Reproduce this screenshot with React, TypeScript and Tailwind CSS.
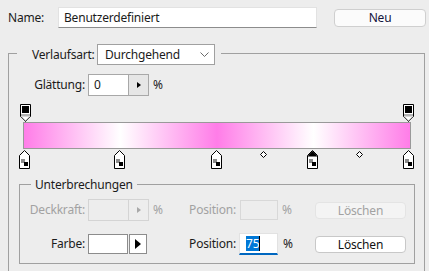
import React from 'react';

const TopStop: React.FC<{ left: string }> = ({ left }) => (
  <svg className={`absolute top-0 ${left}`} width="11" height="18" viewBox="0 0 11 18">
    <path d="M0.5 0.5 H10.5 V12.5 L5.5 17.5 L0.5 12.5 Z" fill="#ffffff" stroke="#000000" />
    <rect x="2" y="2" width="7" height="7" fill="#000000" />
    <rect x="1" y="10" width="9" height="2.5" fill="#b4b4b4" />
    <path d="M1.5 13 L5.5 17 L9.5 13" fill="none" stroke="#9a9a9a" />
  </svg>
);

const BottomStop: React.FC<{ left: string; active?: boolean }> = ({ left, active }) => (
  <svg className={`absolute top-0 ${left}`} width="11" height="19" viewBox="0 0 11 19">
    <path d="M5.5 0.5 L10.5 5.5 V18.5 H0.5 V5.5 Z" fill="#ffffff" stroke="#000000" />
    {active && <path d="M5.5 1 L10 5.5 V6.5 H1 V5.5 Z" fill="#000000" />}
    <rect x="2" y="8" width="7" height="9" fill="#ffffff" />
    <rect x="2" y="9" width="4" height="4" fill="#8c8c8c" />
    <rect x="5" y="12" width="4" height="4" fill="#000000" />
  </svg>
);

const Diamond: React.FC<{ left: string }> = ({ left }) => (
  <svg className={`absolute top-[1px] ${left}`} width="7" height="7" viewBox="0 0 7 7">
    <path d="M3.5 0.5 L6.5 3.5 L3.5 6.5 L0.5 3.5 Z" fill="#ffffff" stroke="#000000" />
  </svg>
);

const SpinField: React.FC<{ value?: string; disabled?: boolean }> = ({ value, disabled }) => (
  <div
    className={`flex h-[22px] w-[61px] border ${
      disabled ? 'border-[#d4d4d4] bg-[#ededed]' : 'border-[#a8a8a8] bg-white'
    }`}
  >
    <div className="flex-1 pl-[5px] leading-[20px]">{value}</div>
    <div
      className={`flex w-[20px] items-center justify-center border-l ${
        disabled ? 'border-[#d4d4d4] bg-[#ededed]' : 'border-[#a8a8a8] bg-[#e6e6e6]'
      }`}
    >
      <svg width="4" height="6" viewBox="0 0 4 6">
        <path d="M0 0 L4 3 L0 6 Z" fill={disabled ? '#a8a8a8' : '#000000'} />
      </svg>
    </div>
  </div>
);

export default function App() {
  return (
    <div
      className="h-[271px] w-[429px] overflow-hidden bg-[#ededed] text-[12px] tracking-[-0.2px] text-[#1b1b1b]"
      style={{ fontFamily: '"Noto Sans", "Open Sans", sans-serif' }}
    >
      {/* Name */}
      <div className="flex items-center pl-[8px] pt-[7px]">
        <span className="w-[50px] leading-[21px]">Name:</span>
        <div className="h-[21px] w-[259px] border border-[#e2e2e2] border-b-[#8c8c8c] bg-white pl-[5px] leading-[19px]">
          Benutzerdefiniert
        </div>
        <button className="ml-[17px] h-[18px] w-[92px] rounded-[4px] border border-[#cfcfcf] bg-[#fbfbfb] text-[12px] leading-[16px] text-[#14143c]">
          Neu
        </button>
      </div>

      {/* Verlauf group */}
      <div className="ml-[8px] mt-[25px] h-[230px] w-[417px] border-x border-t border-[#a0a0a0]">
        <div className="-mt-[10px] ml-[8px] flex w-fit items-center bg-[#ededed] pl-[15px] pr-[6px]">
          <span className="w-[65px] leading-[21px]">Verlaufsart:</span>
          <div className="flex h-[21px] w-[118px] items-center justify-between border border-[#a0a0a0] bg-white pl-[7px] pr-[5px]">
            <span className="leading-[19px]">Durchgehend</span>
            <svg width="9" height="5" viewBox="0 0 9 5">
              <path d="M0.5 0.5 L4.5 4.5 L8.5 0.5" fill="none" stroke="#6a6a6a" />
            </svg>
          </div>
        </div>

        <div className="mt-[9px] flex items-center">
          <span className="w-[76px] text-right leading-[22px]">Glättung:</span>
          <div className="ml-[3px]">
            <SpinField value="0" />
          </div>
          <span className="ml-[4px]">%</span>
        </div>

        {/* Gradient bar with stops */}
        <div className="ml-[14px] mt-[8px] w-[388px]">
          <div className="relative h-[18px]">
            <TopStop left="left-[-3px]" />
            <TopStop left="left-[380px]" />
          </div>
          <div className="h-[27px] border border-[#999999] bg-[linear-gradient(to_right,#ff7de8_0%,#ffffff_25%,#ff7de8_50%,#ffffff_75%,#ff7de8_100%)]" />
          <div className="relative mt-[1px] h-[20px]">
            <BottomStop left="left-[-4px]" />
            <BottomStop left="left-[91px]" />
            <BottomStop left="left-[188px]" />
            <Diamond left="left-[237px]" />
            <BottomStop left="left-[284px]" active />
            <Diamond left="left-[333px]" />
            <BottomStop left="left-[380px]" />
          </div>
        </div>

        {/* Unterbrechungen group */}
        <div className="ml-[10px] mt-[14px] h-[80px] w-[396px] border border-[#a0a0a0]">
          <div className="-mt-[9px] ml-[11px] w-fit bg-[#ededed] px-[4px] leading-[17px]">Unterbrechungen</div>

          <div className="mt-[6px] flex items-center text-[#a2a2a2]">
            <span className="w-[65px] text-right leading-[22px]">Deckkraft:</span>
            <div className="ml-[3px]">
              <SpinField disabled />
            </div>
            <span className="ml-[4px] w-[20px]">%</span>
            <span className="w-[63px] text-right">Position:</span>
            <div className="ml-[4px] h-[20px] w-[38px] border border-[#d8d8d8]" />
            <span className="ml-[4px] w-[32px]">%</span>
            <button className="ml-[1px] h-[17px] w-[91px] rounded-[4px] border border-[#e4e4e4] bg-[#f4f4f4] text-[12px] leading-[15px] text-[#a2a2a2]">
              Löschen
            </button>
          </div>

          <div className="mt-[12px] flex items-center">
            <span className="w-[65px] text-right leading-[22px]">Farbe:</span>
            <div className="ml-[3px] flex w-[61px] items-center">
              <div className="h-[20px] w-[40px] border border-[#8c8c8c] bg-white" />
              <div className="ml-[1px] flex h-[20px] w-[18px] items-center justify-center border border-[#8c8c8c] bg-white">
                <svg width="6" height="10" viewBox="0 0 6 10">
                  <path d="M0 0 L6 5 L0 10 Z" fill="#000000" />
                </svg>
              </div>
            </div>
            <span className="ml-[4px] w-[20px]" />
            <span className="w-[63px] text-right">Position:</span>
            <div className="ml-[3px] flex h-[22px] w-[39px] items-center border border-[#e2e2e2] border-b-2 border-b-[#0067c0] bg-white pl-[6px]">
              <span className="bg-[#0078d7] leading-[15px] text-white">75</span>
              <span className="h-[15px] w-px bg-black" />
            </div>
            <span className="ml-[5px] w-[31px]">%</span>
            <button className="ml-[1px] h-[17px] w-[91px] rounded-[4px] border border-[#c8c8c8] bg-white text-[12px] leading-[15px] text-[#111111]">
              Löschen
            </button>
          </div>
        </div>
      </div>
    </div>
  );
}
